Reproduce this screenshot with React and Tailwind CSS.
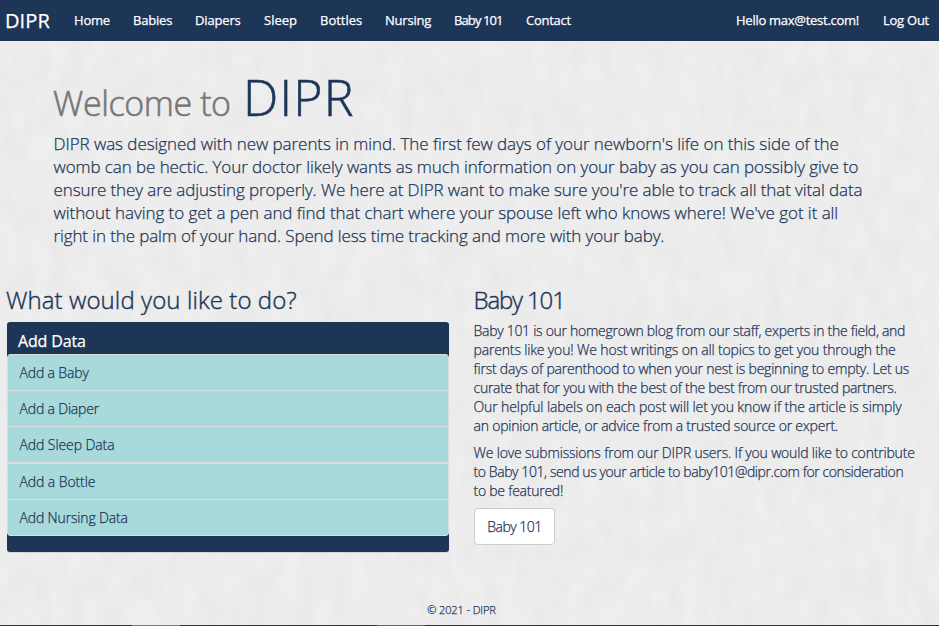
const navLinks = [
  { label: "Home", className: "w-[59px] tracking-[-0.2px]" },
  { label: "Babies", className: "w-[62px] tracking-[-0.2px]" },
  { label: "Diapers", className: "w-[69px] tracking-[-0.15px]" },
  { label: "Sleep", className: "w-[56px]" },
  { label: "Bottles", className: "w-[65px]" },
  { label: "Nursing", className: "w-[69px] tracking-[-0.2px]" },
  { label: "Baby 101", className: "w-[72px] tracking-[-0.9px]" },
  { label: "Contact", className: "tracking-[-0.25px]" },
];

const introLines = [
  { text: "DIPR was designed with new parents in mind. The first few days of your newborn's life on this side of the", className: "tracking-[-0.06px]" },
  { text: "womb can be hectic. Your doctor likely wants as much information on your baby as you can possibly give to", className: "tracking-[-0.09px]" },
  { text: "ensure they are adjusting properly. We here at DIPR want to make sure you're able to track all that vital data", className: "tracking-[-0.1px]" },
  { text: "without having to get a pen and find that chart where your spouse left who knows where! We've got it all", className: "tracking-[-0.06px]" },
  { text: "right in the palm of your hand. Spend less time tracking and more with your baby.", className: "tracking-[-0.12px]" },
];

const actions = [
  { label: "Add a Baby", className: "h-[36px] tracking-[-0.15px]" },
  { label: "Add a Diaper", className: "h-[36px] tracking-[-0.18px]" },
  { label: "Add Sleep Data", className: "h-[36px] tracking-[-0.09px]" },
  { label: "Add a Bottle", className: "h-[37px] border-t-2 tracking-[-0.09px]" },
  { label: "Add Nursing Data", className: "h-[36px] tracking-[-0.15px]" },
];

const blogLines = [
  { text: "Baby 101 is our homegrown blog from our staff, experts in the field, and", className: "tracking-[-0.28px]" },
  { text: "parents like you! We host writings on all topics to get you through the", className: "tracking-[-0.16px]" },
  { text: "first days of parenthood to when your nest is beginning to empty. Let us", className: "tracking-[-0.22px]" },
  { text: "curate that for you with the best of the best from our trusted partners.", className: "tracking-[-0.27px]" },
  { text: "Our helpful labels on each post will let you know if the article is simply", className: "tracking-[-0.11px]" },
  { text: "an opinion article, or advice from a trusted source or expert.", className: "tracking-[-0.22px]" },
];

const submitLines = [
  { text: "We love submissions from our DIPR users. If you would like to contribute", className: "tracking-[-0.19px]" },
  { text: "to Baby 101, send us your article to baby101@dipr.com for consideration", className: "tracking-[-0.41px]" },
  { text: "to be featured!", className: "tracking-[-0.25px]" },
];

function Lines({ lines, className }) {
  return (
    <p className={className}>
      {lines.map((line) => (
        <span key={line.text} className={`block whitespace-nowrap ${line.className}`}>
          {line.text}{" "}
        </span>
      ))}
    </p>
  );
}

// Faint paper grain behind the whole page.
function PaperTexture() {
  return (
    <svg className="absolute inset-0 -z-10 h-full w-full" aria-hidden="true">
      <filter id="paper" x="0" y="0" width="100%" height="100%" colorInterpolationFilters="sRGB">
        <feTurbulence type="fractalNoise" baseFrequency="0.06 0.03" numOctaves="5" seed="4" />
        <feColorMatrix values="0.035 0 0 0 0.909  0.035 0 0 0 0.909  0.035 0 0 0 0.909  0 0 0 0 1" />
      </filter>
      <rect width="100%" height="100%" filter="url(#paper)" />
    </svg>
  );
}

export default function App() {
  return (
    <div className="relative isolate flex h-[626px] w-[939px] flex-col overflow-hidden bg-[#ececec] font-['Open_Sans','Noto_Sans',sans-serif] font-light text-[#1d3557] [-webkit-text-stroke:0.25px_currentColor]">
      <PaperTexture />

      <nav className="flex h-[41px] shrink-0 items-center whitespace-nowrap bg-[#1d3557] text-[13px] font-normal text-white">
        <a className="w-[69px] pl-[5px] text-[20px] tracking-[0.1px]">DIPR</a>
        <div className="flex pl-[5px]">
          {navLinks.map((link) => (
            <a key={link.label} className={link.className}>{link.label}</a>
          ))}
        </div>
        <div className="ml-auto flex gap-[24px] pr-[10px]">
          <a className="tracking-[-0.27px]">Hello max@test.com!</a>
          <a className="tracking-[-0.25px]">Log Out</a>
        </div>
      </nav>

      <header className="px-[53px] pt-[29px]">
        <h1 className="flex h-[55px] items-baseline whitespace-nowrap text-[50px] leading-[55px] [-webkit-text-stroke:0.6px_currentColor]">
          <small className="w-[190px] text-[34px] tracking-[-0.4px] text-[#777]">Welcome to</small>
          <span className="tracking-[1.2px]">DIPR</span>
        </h1>
        <Lines lines={introLines} className="mt-[7px] pl-[0.5px] text-[17px] leading-[23px]" />
      </header>

      <main className="mt-[40px] flex">
        <section className="w-[467px] pl-[6px]">
          <h2 className="whitespace-nowrap text-[24px] leading-[26px] tracking-[0.09px] [-webkit-text-stroke:0.4px_currentColor]">What would you like to do?</h2>
          <div className="ml-px mt-[9px] h-[230px] w-[442px] rounded-[3px] bg-[#1d3557] shadow-[0_1px_1px_rgba(0,0,0,0.1)]">
            <h3 className="h-[32px] pl-[11px] pt-[8px] text-[16px] leading-[22px] font-normal tracking-[-0.15px] text-white">Add Data</h3>
            <ul className="overflow-hidden rounded-[4px] border-x border-b border-[#ddd] bg-[#a8dadc] text-[14px] leading-[19px]">
              {actions.map((action) => (
                <li key={action.label} className={`flex items-center border-t border-[#ddd] pl-[11.5px] ${action.className}`}>
                  {action.label}
                </li>
              ))}
            </ul>
          </div>
        </section>

        <section className="pl-[6.5px]">
          <h2 className="whitespace-nowrap text-[24px] leading-[26px] tracking-[-1.15px] [-webkit-text-stroke:0.4px_currentColor]">Baby 101</h2>
          <div className="text-[14px] leading-[19px]">
            <Lines lines={blogLines} className="mt-2" />
            <Lines lines={submitLines} className="mt-2" />
            <button className="ml-[0.5px] mt-2 flex h-[37px] w-[81px] items-center justify-center rounded-[4px] border border-[#ccc] bg-white tracking-[-0.5px]">
              Baby 101
            </button>
          </div>
        </section>
      </main>

      <footer className="mt-auto">
        <p className="mb-[8px] pr-[16px] text-center text-[11px] leading-[15px] tracking-[-0.1px]">© 2021 - DIPR</p>
        <div className="flex h-px bg-[#333]">
          <div className="ml-[132px] w-[48px] bg-[#a8703c]" />
          <div className="ml-[197px] w-[48px] bg-[#666]" />
        </div>
      </footer>
    </div>
  );
}
